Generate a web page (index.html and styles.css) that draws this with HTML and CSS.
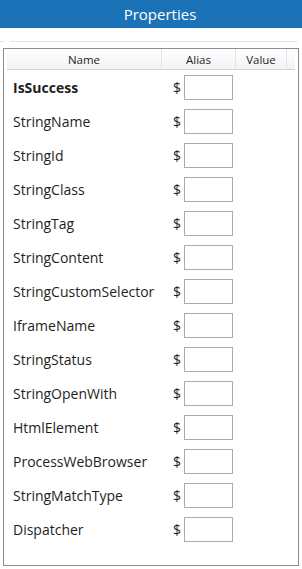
FILE: index.html
```html
<!DOCTYPE html>
<html>
<head>
<meta charset="utf-8">
<link rel="stylesheet" href="styles.css">
</head>
<body>
<div class="titlebar"><span class="title">Properties</span></div>
<div class="sep"><div class="seg-a"></div><div class="seg-b"></div></div>
<div class="panel">
  <div class="header">
    <div class="hcell hname">Name</div>
    <div class="hcell halias">Alias</div>
    <div class="hcell hvalue">Value</div>
    <div class="hcell hrest"></div>
  </div>
  <div class="rows">
    <div class="row"><div class="name bold">IsSuccess</div><div class="dollar">$</div><div class="box"></div></div>
    <div class="row"><div class="name">StringName</div><div class="dollar">$</div><div class="box"></div></div>
    <div class="row"><div class="name">StringId</div><div class="dollar">$</div><div class="box"></div></div>
    <div class="row"><div class="name">StringClass</div><div class="dollar">$</div><div class="box"></div></div>
    <div class="row"><div class="name">StringTag</div><div class="dollar">$</div><div class="box"></div></div>
    <div class="row"><div class="name">StringContent</div><div class="dollar">$</div><div class="box"></div></div>
    <div class="row"><div class="name">StringCustomSelector</div><div class="dollar">$</div><div class="box"></div></div>
    <div class="row"><div class="name">IframeName</div><div class="dollar">$</div><div class="box"></div></div>
    <div class="row"><div class="name">StringStatus</div><div class="dollar">$</div><div class="box"></div></div>
    <div class="row"><div class="name">StringOpenWith</div><div class="dollar">$</div><div class="box"></div></div>
    <div class="row"><div class="name">HtmlElement</div><div class="dollar">$</div><div class="box"></div></div>
    <div class="row"><div class="name">ProcessWebBrowser</div><div class="dollar">$</div><div class="box"></div></div>
    <div class="row"><div class="name">StringMatchType</div><div class="dollar">$</div><div class="box"></div></div>
    <div class="row"><div class="name">Dispatcher</div><div class="dollar">$</div><div class="box"></div></div>
  </div>
</div>
</body>
</html>
```
FILE: styles.css
```css
html, body {
  margin: 0;
  padding: 0;
  background: #ffffff;
}
body {
  width: 302px;
  height: 569px;
  overflow: hidden;
  font-family: "Open Sans", "Noto Sans", sans-serif;
  color: #1e1e1e;
}
.titlebar {
  height: 28px;
  background: #1b72b7;
  color: #ffffff;
  display: flex;
  align-items: center;
  justify-content: center;
  padding-left: 18px;
  box-sizing: border-box;
}
.title {
  font-size: 15px;
  line-height: 28px;
}
.sep {
  margin-top: 13px;
  height: 1px;
  display: flex;
}
.seg-a {
  width: 4px;
  background: #dde3ea;
}
.seg-b {
  margin-left: 6px;
  width: 287px;
  background: #dde3ea;
}
.panel {
  margin: 6px 0 0 3px;
  width: 296px;
  height: 518px;
  box-sizing: border-box;
  border: 1px solid #8c8c8c;
  padding: 0 3px 0 3px;
}
.header {
  height: 21px;
  box-sizing: border-box;
  display: flex;
  background: linear-gradient(#ffffff, #f1f3f6);
  border-bottom: 1px solid #d5d5d5;
  font-size: 11.5px;
}
.hcell {
  display: flex;
  align-items: center;
  justify-content: center;
  border-right: 1px solid #e2e4e8;
  box-sizing: border-box;
}
.hname { width: 155px; }
.halias { width: 74px; }
.hvalue { width: 51px; }
.hrest { flex: 1; border-right: none; }
.rows {
  display: flex;
  flex-direction: column;
}
.row {
  height: 34px;
  display: flex;
  align-items: center;
}
.name {
  width: 166px;
  padding-left: 6px;
  box-sizing: border-box;
  font-size: 14px;
}
.bold { font-weight: 700; }
.dollar {
  width: 11px;
  font-size: 14px;
  text-align: left;
}
.box {
  width: 49px;
  height: 25px;
  box-sizing: border-box;
  border: 1px solid #ababab;
  background: #ffffff;
}
```
